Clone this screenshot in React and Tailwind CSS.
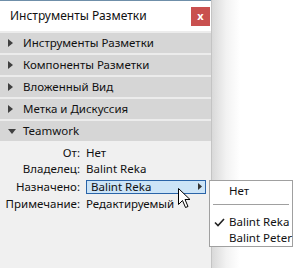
import React from 'react';

const sections = [
  'Инструменты Разметки',
  'Компоненты Разметки',
  'Вложенный Вид',
  'Метка и Дискуссия',
];

function TriangleRight() {
  return (
    <svg width="5" height="8" viewBox="0 0 5 8" className="shrink-0">
      <path d="M0 0 L5 4 L0 8 Z" fill="#404040" />
    </svg>
  );
}

function TriangleDown() {
  return (
    <svg width="8" height="5" viewBox="0 0 8 5" className="shrink-0">
      <path d="M0 0 L8 0 L4 5 Z" fill="#404040" />
    </svg>
  );
}

function SectionRow({ title, open }) {
  return (
    <div className="flex h-[20px] items-center bg-[#d6d6d6] pl-[8px]">
      <div className="flex w-[15px] items-center">
        {open ? <TriangleDown /> : <TriangleRight />}
      </div>
      <span className="whitespace-nowrap text-[11.5px] leading-none text-[#111]">{title}</span>
    </div>
  );
}

export default function App() {
  return (
    <div
      className="relative flex h-[268px] w-[293px] overflow-hidden bg-white"
      style={{ fontFamily: '"Noto Sans", "Segoe UI", sans-serif' }}
    >
      {/* Panel */}
      <div className="flex h-full w-[212px] shrink-0 flex-col border-r border-[#c4c4c4] bg-[#f0f0f0]">
        <div className="flex h-[31px] items-center justify-between border-t border-[#6f8fa9] bg-white pl-[10px] pr-[1px]">
          <span className="text-[12px] text-[#111]">Инструменты Разметки</span>
          <div className="flex h-[19px] w-[19px] items-center justify-center bg-[#c9504f] pb-[1px] text-[11px] font-bold leading-none text-white">
            x
          </div>
        </div>
        <div className="flex flex-col gap-[2px] bg-[#ececec] pt-[2px]">
          {sections.map((s) => (
            <SectionRow key={s} title={s} />
          ))}
          <SectionRow title="Teamwork" open />
        </div>

        <div className="grid grid-cols-[80px_1fr] gap-x-[6px] pt-[4px] text-[11.5px] leading-none text-[#111]">
          <div className="flex h-[16px] items-center justify-end">От:</div>
          <div className="flex h-[16px] items-center">Нет</div>
          <div className="flex h-[16px] items-center justify-end">Владелец:</div>
          <div className="flex h-[16px] items-center">Balint Reka</div>
          <div className="flex h-[19px] items-center justify-end">Назначено:</div>
          <div className="flex h-[19px] items-center">
            <div className="flex h-[14px] w-[120px] items-center justify-between border border-[#2a64a8] bg-[#cce4f7] pl-[4px] pr-[3px]">
              <span>Balint Reka</span>
              <svg width="4" height="7" viewBox="0 0 4 7">
                <path d="M0 0 L4 3.5 L0 7 Z" fill="#333" />
              </svg>
            </div>
          </div>
          <div className="flex h-[16px] items-center justify-end whitespace-nowrap">Примечание:</div>
          <div className="flex h-[16px] items-center whitespace-nowrap">Редактируемый</div>
        </div>
      </div>

      {/* Shadow */}
      <div className="h-full w-[28px] bg-gradient-to-r from-[#d9d9d9] via-[#f2f2f2] to-white" />

      {/* Submenu */}
      <div className="absolute left-[209px] top-[180px] flex h-[67px] w-[84px] flex-col whitespace-nowrap border border-[#a0a0a0] bg-white text-[11.5px] leading-none text-[#111]">
        <div className="flex h-[17px] items-center pl-[19px] pt-[2px]">Нет</div>
        <div className="mx-[3px] mb-[9px] mt-[6px] h-px bg-[#a0a0a0]" />
        <div className="flex h-[16px] items-center pl-[4px]">
          <svg width="11" height="9" viewBox="0 0 11 9" className="mr-[4px] shrink-0">
            <path d="M1 4.5 L4 7.5 L10 1" stroke="#222" strokeWidth="1.6" fill="none" />
          </svg>
          Balint Reka
        </div>
        <div className="flex h-[16px] items-center pl-[19px]">Balint Peter</div>
      </div>

      {/* Cursor */}
      <svg
        className="absolute left-[178px] top-[188px]"
        width="13"
        height="21"
        viewBox="0 0 13 21"
      >
        <path
          d="M0.5 0.5 L0.5 16.5 L4.5 12.5 L7.5 19.5 L10 18.5 L7 11.5 L12 11.5 Z"
          fill="white"
          stroke="black"
          strokeWidth="1"
        />
      </svg>
    </div>
  );
}
